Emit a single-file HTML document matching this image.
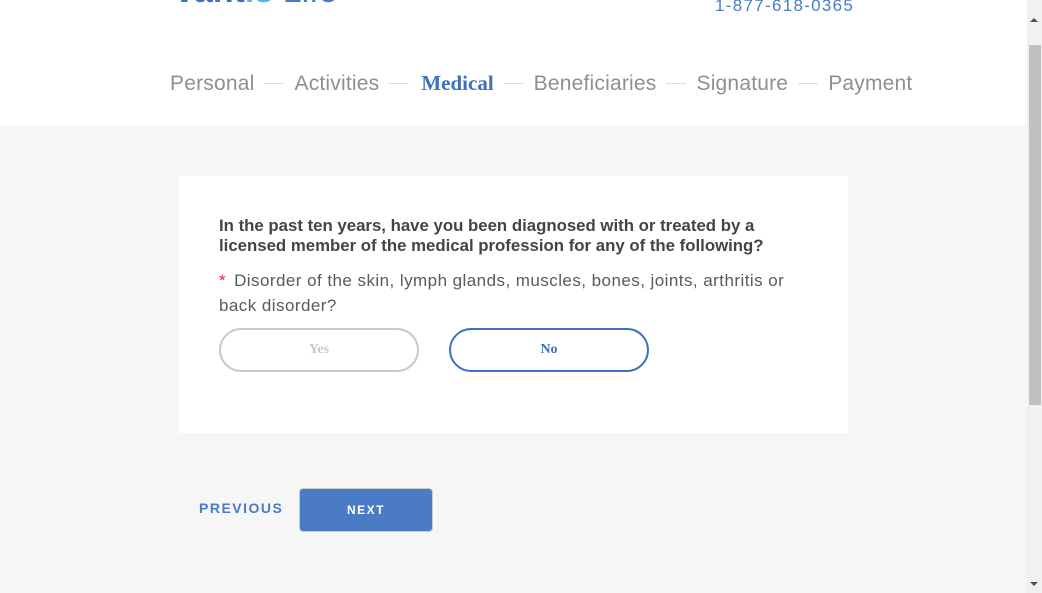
<!DOCTYPE html>
<html><head><meta charset="utf-8"><style>
*{margin:0;padding:0;box-sizing:border-box}
body{width:1042px;height:593px;overflow:hidden;background:#f6f6f6;font-family:"Liberation Sans",sans-serif;position:relative}
.hdr{position:absolute;left:0;top:0;width:1027px;height:126px;background:#fff;overflow:hidden}
.logo{position:absolute;left:175px;top:-26px;font-size:34px;line-height:34px;color:#4a7bc8;white-space:nowrap}
.logo span{color:#3f6fc0;font-weight:bold}
.logo span u{color:#55b6e6;text-decoration:none}
.phone{position:absolute;left:715px;top:-4px;font-size:17px;color:#4a7bc8;letter-spacing:1.3px}
.nav{position:absolute;top:71px;left:170px;font-size:21px;color:#8f8f8f;white-space:nowrap;display:flex;align-items:center;letter-spacing:0.2px}
.nav .sep{display:inline-block;width:20px;height:1px;background:#ddd;margin:0 10px 0 10px}
.nav .act{font-family:"Liberation Serif",serif;font-weight:bold;color:#3e6fc1;font-size:21px;letter-spacing:0}
.card{position:absolute;left:179px;top:176px;width:669px;height:257px;background:#fff}
.q{position:absolute;left:40px;top:40px;width:560px;font-size:16.8px;font-weight:bold;color:#444;line-height:20px}
.sub{position:absolute;left:40px;top:92px;width:580px;font-size:17px;color:#5a5a5a;line-height:25px;letter-spacing:0.45px}
.sub i{color:#e0283b;font-style:normal;margin-right:8px}
.btn{position:absolute;top:152px;width:200px;height:44px;border-radius:22px;font-family:"Liberation Serif",serif;font-weight:bold;font-size:14px;text-align:center;line-height:40px}
.yes{left:40px;border:2px solid #c8c8c8;color:#c8c8c8}
.no{left:270px;border:2px solid #3e6fc1;color:#3e6fc1}
.prev{position:absolute;left:199px;top:500px;font-size:14px;font-weight:bold;color:#4a7bc8;letter-spacing:1.5px}
.next{position:absolute;left:299px;top:488px;width:134px;height:44px;background:#4a7bc4;border:1px solid #ccc;border-radius:4px;color:#fff;font-size:12px;font-weight:bold;letter-spacing:1.5px;text-align:center;line-height:42px}
.sb{position:absolute;left:1027px;top:0;width:15px;height:593px;background:#f1f1f1}
.th{position:absolute;left:1029px;top:45px;width:12px;height:360px;background:#c1c1c1}
.up{position:absolute;left:1030px;top:18px;width:0;height:0;border-left:4px solid transparent;border-right:4px solid transparent;border-bottom:4px solid #505050}
.dn{position:absolute;left:1030px;top:582px;width:0;height:0;border-left:4px solid transparent;border-right:4px solid transparent;border-top:4px solid #505050}
</style></head><body>
<div class="hdr">
<div class="logo"><span>vant<u>is</u></span> Life</div>
<div class="phone">1-877-618-0365</div>
<div class="nav">Personal<span class="sep"></span>Activities<span class="sep" style="margin-right:12px"></span><span class="act">Medical</span><span class="sep"></span>Beneficiaries<span class="sep"></span>Signature<span class="sep"></span>Payment</div>
</div>
<div class="card">
<div class="q">In the past ten years, have you been diagnosed with or treated by a licensed member of the medical profession for any of the following?</div>
<div class="sub"><i>*</i>Disorder of the skin, lymph glands, muscles, bones, joints, arthritis or back disorder?</div>
<div class="btn yes">Yes</div>
<div class="btn no">No</div>
</div>
<div class="prev">PREVIOUS</div>
<div class="next">NEXT</div>
<div class="sb"></div><div class="th"></div><div class="up"></div><div class="dn"></div>
</body></html>
